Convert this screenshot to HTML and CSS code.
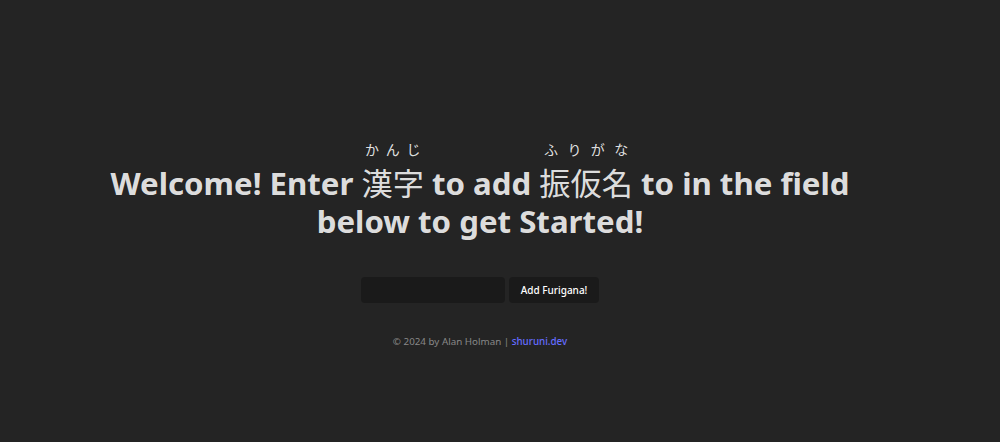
FILE: index.html
```html
<!DOCTYPE html>
<html lang="en">
<head>
<meta charset="utf-8">
<title>Furigana</title>
<link rel="stylesheet" href="styles.css">
</head>
<body>
<main class="app">
  <h1 class="title">Welcome! Enter <ruby>漢字<rt>かんじ</rt></ruby> to add <ruby>振仮名<rt>ふりがな</rt></ruby> to in the field below to get Started!</h1>
  <form class="form">
    <input class="field" type="text">
    <button class="btn" type="button">Add Furigana!</button>
  </form>
  <footer class="footer">© 2024 by Alan Holman | <a class="link" href="#">shuruni.dev</a></footer>
</main>
</body>
</html>
```
FILE: styles.css
```css
html, body {
  margin: 0;
  height: 100%;
  background: #242424;
}
body {
  font-family: "Noto Sans", "Noto Sans CJK JP", sans-serif;
  color: rgba(255, 255, 255, 0.87);
}
.app {
  width: 960px;
  padding-top: 140px;
  display: flex;
  flex-direction: column;
  align-items: center;
}
.title {
  width: 760px;
  margin: 0;
  text-align: center;
  font-size: 31.2px;
  font-weight: 700;
  line-height: 38px;
}
.title ruby {
  font-weight: 400;
}
.title rt {
  font-size: 14px;
  font-weight: 400;
  line-height: 16px;
  padding-bottom: 8px;
}
.form {
  margin-top: 37px;
  display: flex;
  gap: 4px;
}
.field {
  width: 144px;
  height: 26px;
  box-sizing: border-box;
  border: none;
  border-radius: 4px;
  background: #1a1a1a;
  color: inherit;
}
.btn {
  height: 26px;
  padding: 0 12px;
  border: none;
  border-radius: 4px;
  background: #1a1a1a;
  color: #fff;
  font-family: "Noto Sans", sans-serif;
  font-size: 10px;
  font-weight: 500;
}
.footer {
  margin-top: 32px;
  font-size: 9.8px;
  color: #888;
}
.link {
  color: #646cff;
  text-decoration: none;
  font-weight: 500;
}
```
